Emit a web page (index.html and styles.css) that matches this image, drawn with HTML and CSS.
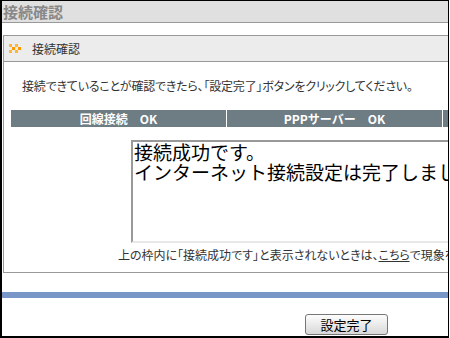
FILE: index.html
```html
<!DOCTYPE html>
<html lang="ja">
<head>
<meta charset="utf-8">
<title>接続確認</title>
<link rel="stylesheet" href="styles.css">
</head>
<body>
<div class="frame">
  <div class="topbar"><h1 class="title">接続確認</h1></div>
  <div class="panel">
    <div class="panel-head">
      <svg class="mark" width="12" height="9" viewBox="0 0 12 9">
        <rect x="0" y="0" width="3" height="3" fill="#ffb733"/>
        <rect x="6" y="0" width="3" height="3" fill="#ffb733"/>
        <rect x="3" y="3" width="3" height="3" fill="#ff9900"/>
        <rect x="9" y="3" width="3" height="3" fill="#ff9900"/>
        <rect x="0" y="6" width="3" height="3" fill="#ffb733"/>
        <rect x="6" y="6" width="3" height="3" fill="#ffb733"/>
      </svg>
      <span class="head-text">接続確認</span>
    </div>
    <div class="panel-body">
      <p class="lead">接続できていることが確認できたら、「設定完了」ボタンをクリックしてください。</p>
      <div class="status">
        <div class="cell">回線接続　OK</div>
        <div class="cell">PPPサーバー　OK</div>
        <div class="cell">DNS　OK</div>
      </div>
      <div class="result">接続成功です。<br>インターネット接続設定は完了しました。</div>
      <p class="note">上の枠内に「接続成功です」と表示されないときは、<a class="link" href="#">こちら</a>で現象を確認してください。</p>
    </div>
  </div>
  <div class="rule"></div>
  <div class="actions"><button class="btn" type="button">設定完了</button></div>
</div>
</body>
</html>
```
FILE: styles.css
```css
html, body {
  margin: 0;
  padding: 0;
  background: #fff;
  overflow: hidden;
}
body {
  font-family: "Noto Sans CJK JP", "Liberation Sans", sans-serif;
  color: #333;
}
.frame {
  box-sizing: border-box;
  width: 449px;
  height: 338px;
  border-style: solid;
  border-color: #000;
  border-width: 1px 1px 2px 2px;
  overflow: hidden;
}
.topbar {
  height: 21px;
  background: #e0e0e0;
  border-bottom: 1px solid #999;
}
.title {
  margin: 0;
  padding-left: 1px;
  font-size: 15px;
  line-height: 21px;
  font-weight: bold;
  color: #888;
}
.panel {
  width: 720px;
  margin: 12px 0 0 1px;
  border: 1px solid #999;
}
.panel-head {
  height: 25px;
  background: #ececec;
  border-bottom: 1px solid #999;
  display: flex;
  align-items: center;
  padding-left: 5px;
}
.mark {
  display: block;
  flex: none;
}
.head-text {
  margin-left: 11px;
  font-size: 12px;
  color: #333;
}
.panel-body {
  padding: 0 0 8px 0;
}
.lead {
  margin: 0;
  padding: 16px 0 0 18px;
  font-size: 12px;
  line-height: 16px;
  font-feature-settings: "palt";
  letter-spacing: -0.2px;
}
.status {
  display: flex;
  gap: 1px;
  margin: 16px 0 0 7px;
}
.cell {
  flex: none;
  width: 215px;
  height: 17px;
  background: #6e7c84;
  color: #fff;
  font-size: 12px;
  line-height: 17px;
  font-weight: bold;
  text-align: center;
}
.result {
  box-sizing: border-box;
  width: 440px;
  height: 103px;
  margin: 13px 0 0 127px;
  border-style: solid;
  border-width: 2px;
  border-color: #999 #e8e8e8 #e8e8e8 #999;
  padding: 0 0 0 1px;
  font-size: 19px;
  line-height: 20px;
  color: #000;
  white-space: nowrap;
}
.note {
  margin: 3px 0 0 0;
  padding-left: 114px;
  font-size: 12px;
  line-height: 18px;
  font-feature-settings: "palt";
  white-space: nowrap;
}
.link {
  color: #333;
  text-decoration: underline;
}
.rule {
  height: 6px;
  margin-top: 19px;
  background: #7896c8;
}
.actions {
  margin-top: 16px;
  padding-left: 303px;
}
.btn {
  display: block;
  width: 83px;
  height: 21px;
  padding: 0;
  border: 1px solid #777;
  border-radius: 3px;
  background: linear-gradient(#fdfdfd, #d8d8d8);
  font-family: "Noto Sans CJK JP", sans-serif;
  font-size: 13px;
  line-height: 19px;
  color: #000;
}
```
